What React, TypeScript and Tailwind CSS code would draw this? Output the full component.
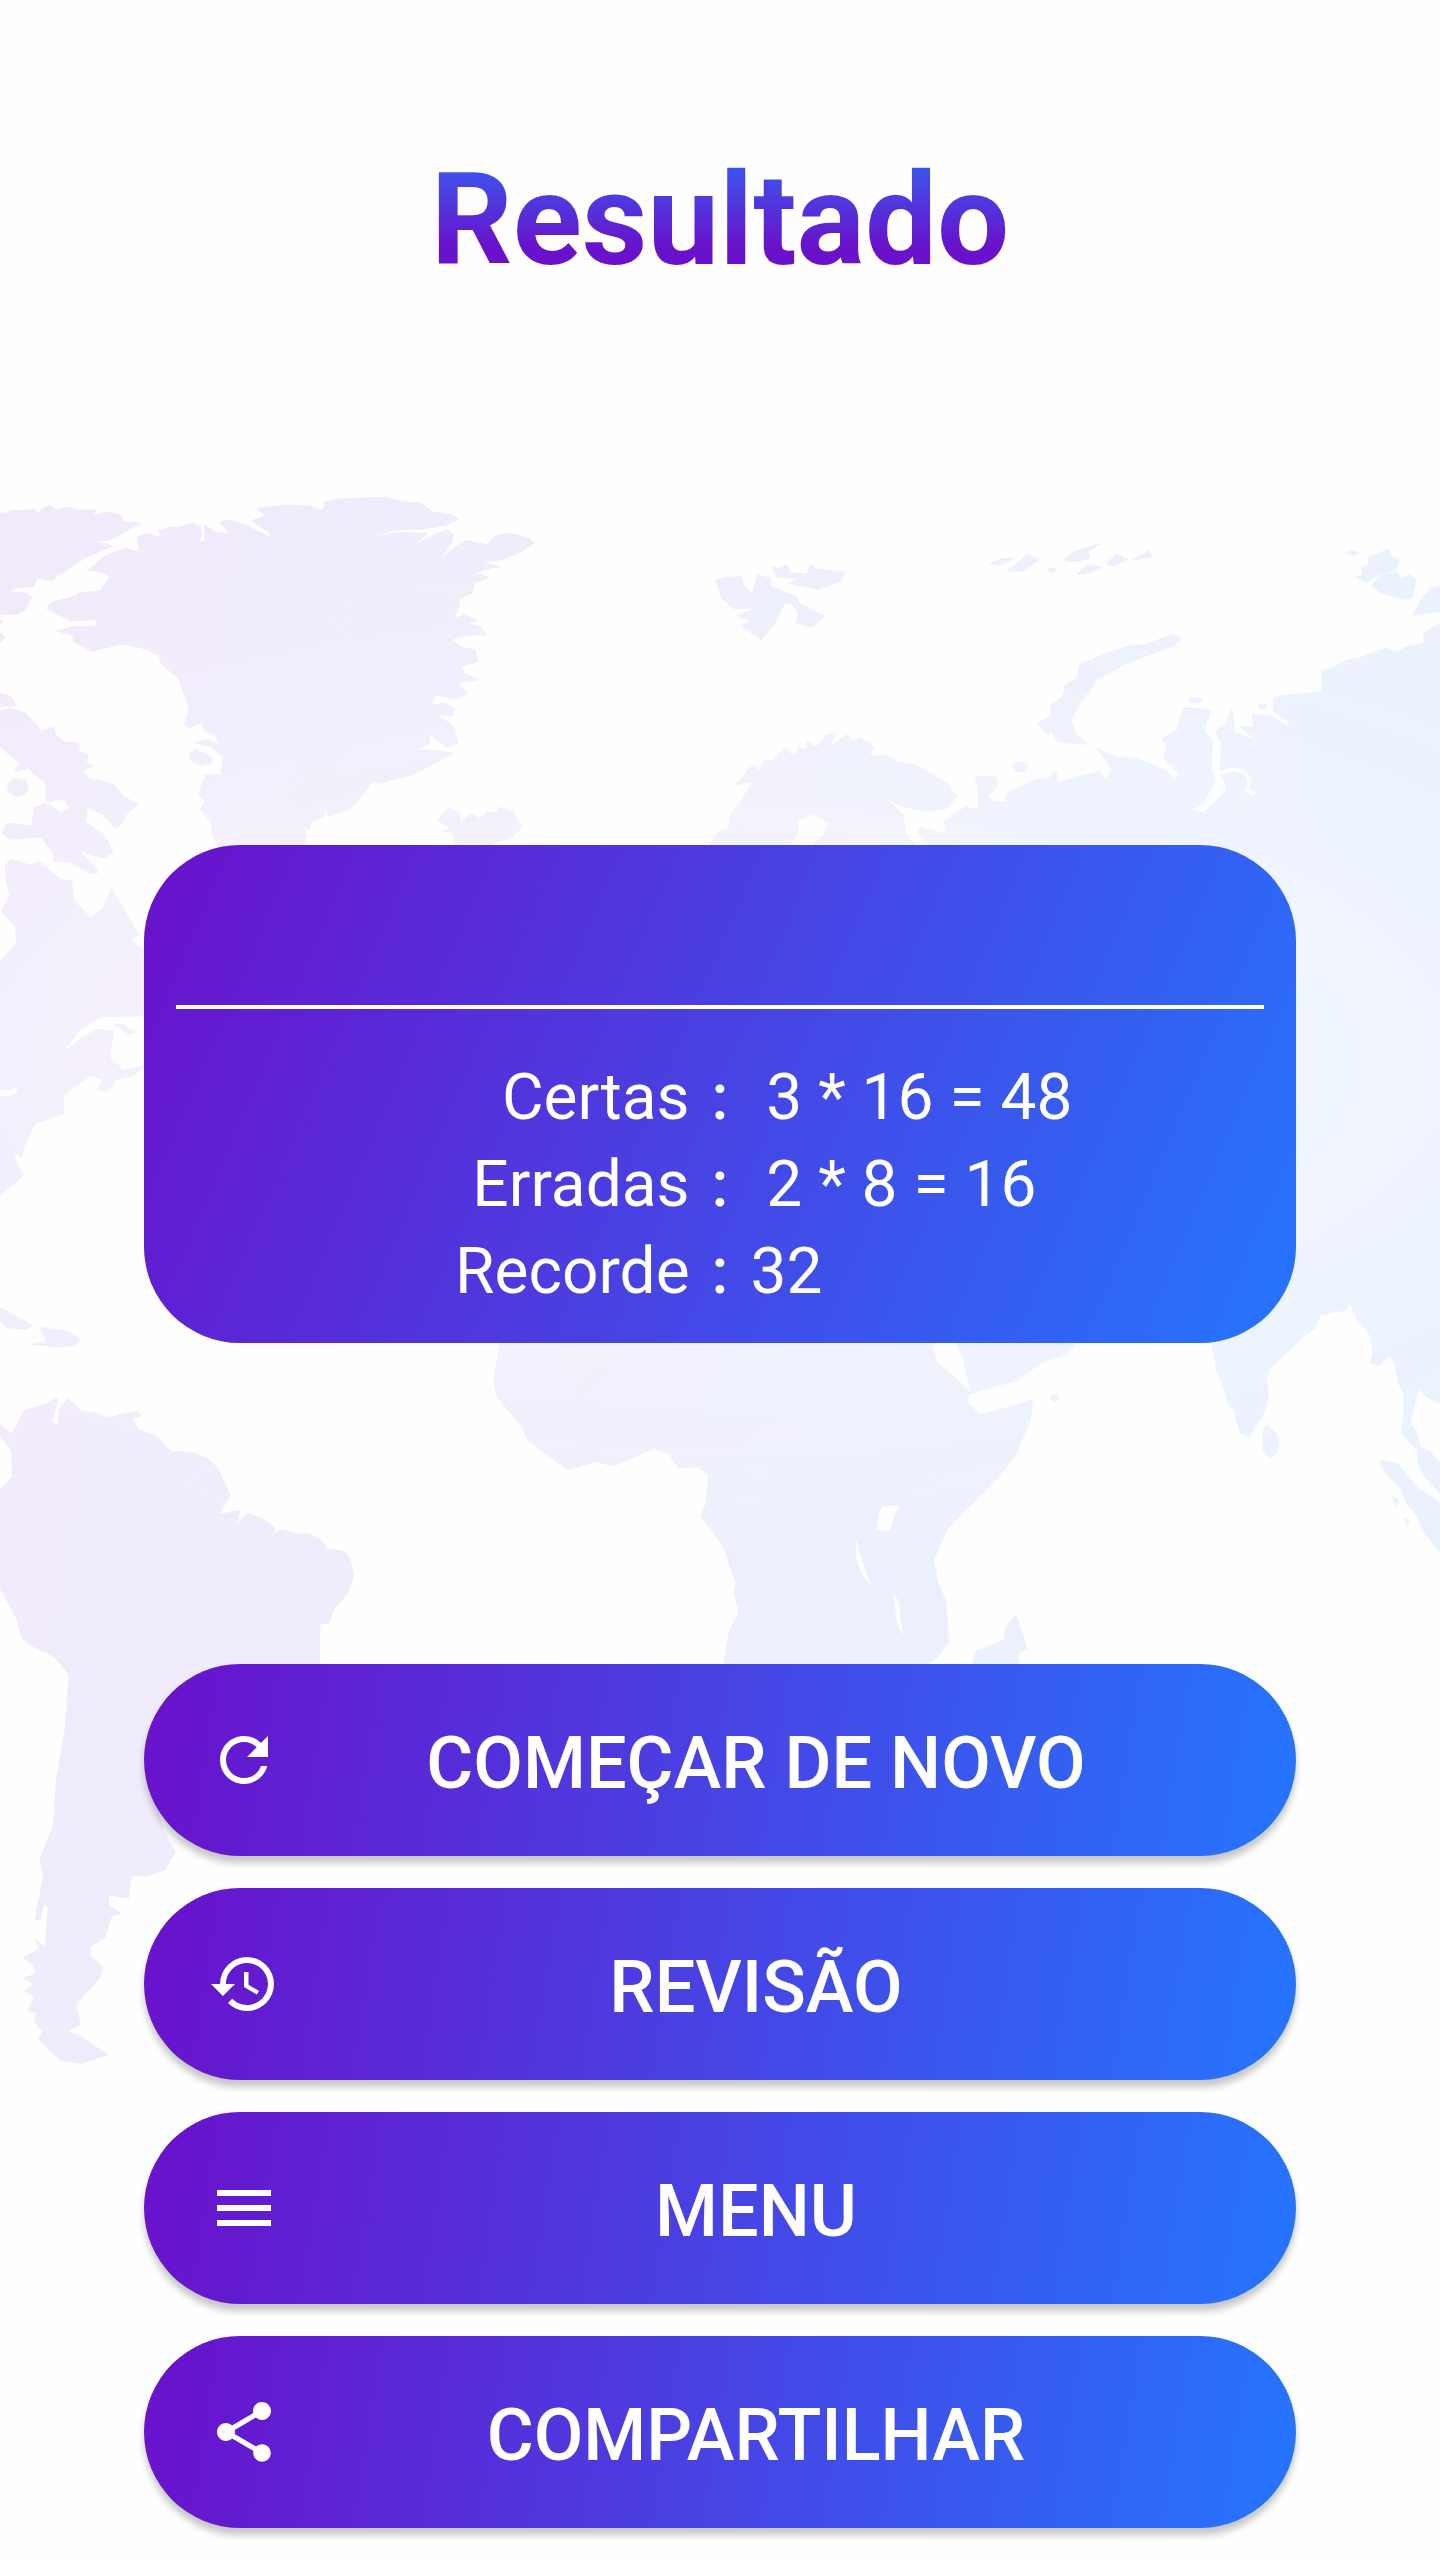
import type { IconType } from "react-icons";
import { MdHistory, MdMenu, MdRefresh, MdShare } from "react-icons/md";

interface Score {
  label: string;
  value: string;
}

interface Action {
  label: string;
  icon: IconType;
}

const scores: Score[] = [
  { label: "Certas", value: " 3 * 16 = 48" },
  { label: "Erradas", value: " 2 * 8 = 16" },
  { label: "Recorde", value: "32" },
];

const actions: Action[] = [
  { label: "COMEÇAR DE NOVO", icon: MdRefresh },
  { label: "REVISÃO", icon: MdHistory },
  { label: "MENU", icon: MdMenu },
  { label: "COMPARTILHAR", icon: MdShare },
];

// land is white and water is black, the gradient shows through the land
function WorldMap() {
  return (
    <svg
      className="absolute inset-0 w-full h-full"
      viewBox="0 0 1440 2560"
      preserveAspectRatio="xMidYMid slice"
      aria-hidden="true"
    >
      <defs>
        <linearGradient id="sea" x1="0" y1="0" x2="1" y2="0.3">
          <stop offset="0" stopColor="#7a18d8" />
          <stop offset="0.95" stopColor="#2575fc" />
        </linearGradient>
        <radialGradient id="glow">
          <stop offset="0" stopColor="#fff" stopOpacity="0.5" />
          <stop offset="1" stopColor="#fff" stopOpacity="0" />
        </radialGradient>
        <mask id="land" maskUnits="userSpaceOnUse" x="0" y="0" width="1440" height="2560">
          <g fill="#fff" stroke="#fff" strokeWidth="3" strokeLinejoin="round">
            {/* Greenland, Ellesmere, Baffin, Iceland */}
            <g transform="translate(0 460) scale(.3571 .3333)">
              <path d="M0 160L20 158L30 152L80 150L95 148L108 162L118 145L140 136L155 150L190 142L215 150L270 150L255 168L300 156L335 164L348 185L392 190L350 215L305 240L250 247L290 250L315 257L280 275L240 292L180 335L160 345L150 360L125 360L105 352L95 378L40 385L20 395L75 400L88 412L70 450L50 462L0 464Z" />
              <path d="M385 232L410 220L450 232L445 212L475 202L500 202L540 188L560 200L565 225L558 248L575 240L572 195L600 215L645 222L615 185L640 180L680 192L765 237L750 215L705 182L745 168L720 145L800 135L870 138L890 150L905 150L910 125L960 116L1080 112L1130 125L1180 130L1210 155L1265 165L1282 178L1250 195L1190 207L1100 210L1030 235L1110 218L1195 220L1155 260L1215 225L1250 210L1270 225L1262 250L1230 300L1290 250L1310 242L1365 255L1385 228L1430 220L1480 235L1495 248L1460 275L1400 300L1345 305L1398 320L1350 330L1310 352L1350 343L1367 355L1330 368L1320 400L1288 415L1283 445L1270 478L1300 465L1335 482L1305 490L1345 500L1360 525L1310 525L1265 538L1290 562L1330 570L1338 605L1290 620L1300 640L1338 660L1280 668L1308 700L1280 717L1220 705L1205 735L1245 730L1273 745L1265 768L1220 760L1270 800L1282 850L1250 862L1200 820L1205 845L1172 870L1220 872L1268 880L1200 920L1150 945L1060 970L1045 962L1010 1010L980 1048L920 1068L910 1045L905 1072L870 1085L865 1110L848 1100L858 1125L850 1180L615 1180L595 1120L592 1085L560 1050L575 1022L555 1005L575 945L620 945L625 890L590 860L545 848L580 840L620 855L600 825L570 810L565 785L530 805L517 795L530 740L515 700L500 655L452 610L445 585L400 565L340 552L290 565L260 575L205 545L205 525L160 513L200 500L270 498L270 478L200 483L130 445L150 425L200 412L220 400L280 392L308 350L290 338L248 330L290 290L350 265L390 275Z" />
              <path d="M530 880L550 868L595 895L590 910L565 918L535 900Z" />
              <path d="M0 700L30 710L45 738L0 738ZM0 480L8 484L0 492ZM0 518L14 532L0 546Z" />
              <path d="M0 752L30 745L70 760L100 790L110 812L150 802L155 825L180 845L220 850L222 875L248 885L240 905L262 918L232 930L240 950L320 975L345 1010L388 1032L355 1060L345 1085L322 1105L290 1065L245 1042L240 1085L290 1125L314 1178L290 1195L215 1165L250 1205L150 1205L150 1170L115 1132L30 1138L5 1120L20 1090L90 1098L95 1045L130 1030L170 1055L197 1045L180 1018L130 1025L128 970L80 925L40 935L55 910L0 860Z" />
              <ellipse cx="50" cy="982" rx="28" ry="26" />
              <path d="M1225 1080L1255 1045L1285 1055L1290 1090L1320 1060L1340 1075L1365 1055L1390 1058L1400 1042L1435 1055L1462 1100L1430 1135L1360 1158L1280 1158L1265 1115L1235 1115L1265 1105Z" />
            </g>
            {/* Labrador and the Caribbean */}
            <g transform="translate(0 840) scale(.3333 .3571)">
              <path d="M130 0L320 0L338 30L310 50L270 40L230 20L295 90L270 95L220 65L170 50Z" />
              <path d="M15 70L35 55L90 70L120 62L180 110L215 115L222 170L270 218L310 190L335 135L415 265L390 280L445 310L445 492L300 495L240 530L185 600L230 565L290 530L340 535L335 570L305 580L335 575L330 610L370 645L440 630L400 660L350 670L320 705L295 695L310 670L270 660L240 680L190 715L190 765L105 795L75 850L65 890L40 870L50 910L70 940L0 995L0 340L50 290L45 240L5 200L30 155L18 110Z" />
              <path d="M340 515L370 518L405 538L385 543Z" />
              <path d="M0 1310L50 1335L98 1358L80 1370L20 1365L0 1345ZM120 1365L200 1375L242 1400L220 1415L170 1420L95 1412L140 1405Z" />
            </g>
            {/* South America */}
            <path
              transform="translate(0 1340) scale(.3333 .4719)"
              d="M0 320L38 290L35 235L0 200L0 180L35 200L75 148L130 138L175 122L155 175L175 180L180 145L205 125L245 152L290 155L320 165L410 152L425 160L395 165L415 190L470 205L515 238Q560 235 590 243Q640 250 665 290L690 330L655 370L720 362L705 395L740 368Q790 375 825 400L820 412L845 403L900 412Q945 405 985 445Q1035 440 1050 465L1060 495Q1055 535 1005 565L985 600L960 600L958 690L700 690L440 900L490 1040L525 1085L495 1122L440 1135L395 1135L385 1182L325 1175L325 1200L362 1215L335 1220L315 1265L270 1285L268 1305L310 1330L295 1355L255 1385L228 1410L240 1450L200 1465L240 1475L322 1515L245 1532L180 1525L115 1480L130 1465L105 1445L110 1425L85 1420L105 1390L75 1380L105 1365L72 1352L105 1345L105 1325L70 1310L120 1290L105 1270L135 1290L145 1200L130 1195L120 1228L105 1228L130 1140L120 1100L160 1030L170 930L195 830L208 710Q180 680 150 665Q90 650 65 630L50 590L0 525Z"
            />
            {/* Europe and Siberia */}
            <g transform="translate(680 500) scale(.4847 .3333)">
              <path d="M75 240L100 232L125 230L132 260L150 285L160 225L185 235L190 260L240 290L245 310L298 350L270 382L240 370L245 340L230 310L215 310L195 370L168 420L125 375L150 365L120 348L155 325L110 325L85 290Z" />
              <path d="M190 200L205 208L220 195L228 218L262 222L268 195L285 208L340 215L330 245L285 268L225 250L245 235L200 230Z" />
              <path d="M640 190L665 176L690 174L660 194ZM675 213L705 180L715 163L740 180L705 213ZM790 180L815 155L868 130L840 155L845 175L815 186ZM820 222L840 195L868 202L835 222ZM880 192L900 162L922 178L895 197ZM935 180L968 153L972 170Z" />
              <ellipse cx="768" cy="210" rx="7" ry="5" />
              <ellipse cx="702" cy="801" rx="15" ry="16" />
              <ellipse cx="1063" cy="601" rx="12" ry="8" />
              <path d="M1015 403L1035 415L1015 440L920 490L860 540L820 620L805 660L815 700L840 733L780 725L765 690L760 705L738 670L765 650L765 615L790 590L795 555L820 535L825 495L870 465L920 440L965 432Z" />
              <path d="M60 1035L80 995L100 985L105 940L125 905L150 850L165 840L115 855L150 795L165 815L175 780L190 785L215 745L235 770L245 745L265 750L260 720L280 745L300 708L320 700L305 745L345 705L355 725L370 712L400 740L390 765L425 765L445 785L485 795L550 850L570 890L550 925L510 935L460 920L420 890L460 945L465 1000L485 1035L515 1035L490 1000L495 980L550 1005L545 965L590 920L615 930L615 870L610 830L650 830L655 860L635 885L645 905L670 905L680 875L740 835L760 838L775 815L780 848L820 830L865 815L880 840L893 810L860 745L900 772L940 775L1000 810L1022 845L1030 820L998 775L1005 735L995 715L1025 690L1040 622L1095 630L1080 695L1098 720L1095 800L1105 840L1080 905L1060 925L1030 920L1080 940L1128 870L1115 810L1118 735L1105 695L1130 665L1138 630L1145 700L1190 720L1155 680L1185 680L1180 645L1215 645L1255 682L1257 665L1225 635L1225 595L1240 588L1325 575L1325 515L1345 505L1375 480L1400 475L1455 445L1480 455L1505 438L1535 430L1535 400L1568 370L1568 1060L60 1060Z" />
              <ellipse cx="1202" cy="619" rx="7" ry="7" />
            </g>
            <path
              transform="translate(1100 500) scale(.3333)"
              d="M740 158L758 150L775 160L758 167ZM865 145L872 168L898 182L885 210L850 218L820 235L795 248L765 230L790 225L785 205L805 195L805 170L835 162ZM815 255L850 223L890 218L905 235L930 225L948 238L935 295L915 297L880 288L845 280ZM940 345L965 295L995 265L1020 260L1020 335Z"
            />
            {/* India and Sumatra */}
            <path
              transform="translate(1180 1270) scale(.3333)"
              d="M60 -1300L780 -1300L780 400L740 380L715 355L690 460L712 490L720 530L750 545L780 580L780 670L735 620L715 580L710 540L665 490L672 440L672 370L655 340L645 285L630 255L600 288L572 280L580 250L575 205L560 180L530 150L510 98L495 120L420 135L405 175L375 195L345 225L270 295L260 330L265 380L250 435L205 500L180 490L165 430L145 400L130 350L110 300L95 215L60 215ZM260 460L290 492L300 520L290 550L270 563L248 540L248 490ZM598 570L655 582L680 615L715 655L780 700L780 845L730 785L710 735L680 700L665 660L610 600ZM637 680L655 690L648 707ZM672 742L688 755L680 767Z"
            />
            {/* Africa and Arabia */}
            <path
              transform="translate(440 1330) scale(.6378 .3333)"
              d="M95 35L85 150L90 200L130 290L138 330L200 418L245 395L272 408L335 355L360 372L375 415L405 410L422 435L418 520L410 560L445 650L465 760L462 790L470 850L455 900L445 1015L755 1015L780 980L797 935L792 810L780 760L773 690L795 595L850 490L880 430L900 380L925 270L928 210L885 235L845 255L825 215L830 185L800 130L780 100L768 35ZM808 35L822 90L833 190L905 150L945 95L980 75L1000 35ZM903 855L920 960L908 965L905 1010L835 1010L840 965L885 930L887 895ZM963 193L970 203L963 213L957 203Z"
            />
          </g>
          <g fill="#000">
            <path transform="translate(680 500) scale(.4847 .3333)" d="M225 1040L245 1000L243 965L275 942L308 970L295 1005L270 1040Z" />
            <path transform="translate(0 840) scale(.3333 .3571)" d="M0 697L30 700L50 693L52 705L35 715L0 718Z" />
            <path
              transform="translate(440 1330) scale(.6378 .3333)"
              d="M695 528L720 528L712 555L706 602L684 600L688 550ZM652 625L660 680L675 765L660 730L652 680ZM711 785L720 820L722 870L728 915L718 890L714 840Z"
            />
          </g>
          <path
            transform="translate(1100 500) scale(.3333)"
            d="M365 820Q405 795 440 825Q455 850 440 870L465 880"
            fill="none"
            stroke="#000"
            strokeWidth="12"
          />
        </mask>
      </defs>
      <g mask="url(#land)">
        <rect width="1440" height="2560" fill="url(#sea)" opacity="0.09" />
        <ellipse cx="720" cy="1060" rx="1300" ry="540" fill="url(#glow)" />
      </g>
    </svg>
  );
}

export default function App() {
  return (
    <main className="relative min-h-screen w-full bg-[#fefefe] font-[Roboto,sans-serif]">
      <WorldMap />
      <div className="relative flex min-h-screen flex-col px-[10%] pt-32 pb-8">
        <h1 className="bg-[linear-gradient(180deg,#2575fc_0px,#6a11cb_120px)] bg-clip-text pb-[212px] text-center text-[128px] leading-[184px] font-bold text-transparent">
          Resultado
        </h1>

        <section className="flex flex-1 items-center">
          <div className="w-full rounded-[96px] bg-[linear-gradient(113deg,#6a11cb,#2575fc)] px-8 pb-7 text-white">
            <div className="h-40" />
            <hr className="border-t-4 border-white" />
            <dl className="pt-[45px] text-[64px] leading-[87px]">
              {scores.map((score) => (
                <div key={score.label} className="grid grid-cols-[1fr_auto_1fr]">
                  <dt className="text-right">{score.label}</dt>
                  <span className="px-[22px] font-medium">:</span>
                  <dd className="whitespace-pre">{score.value}</dd>
                </div>
              ))}
            </dl>
          </div>
        </section>

        <nav className="flex flex-col gap-8">
          {actions.map(({ label, icon: Icon }) => (
            <button
              key={label}
              type="button"
              className="flex h-48 items-center rounded-full bg-[linear-gradient(99deg,#6a11cb,#2575fc)] px-16 text-white shadow-[0_7px_7px_rgba(0,0,0,0.22)]"
            >
              <Icon className="size-[72px] shrink-0" />
              <span className="flex-1 pt-2 text-center text-[72px] leading-[84px] font-medium">{label}</span>
            </button>
          ))}
        </nav>
      </div>
    </main>
  );
}
